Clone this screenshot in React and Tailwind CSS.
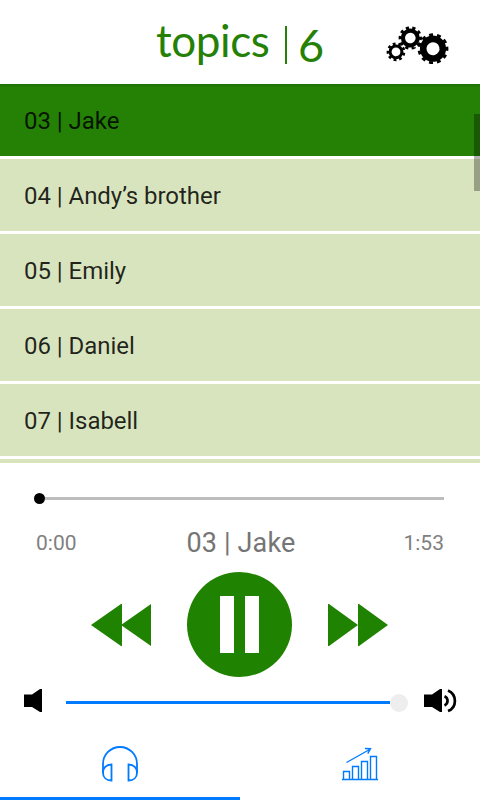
import React, { useState } from 'react';

const tracks = ['03 | Jake', '04 | Andy’s brother', '05 | Emily', '06 | Daniel', '07 | Isabell'];

const App = () => {
  const [current, setCurrent] = useState(0);

  return (
    <div className="flex h-[800px] w-[480px] flex-col overflow-hidden bg-white font-['Roboto',sans-serif]">
      <Header />
      <TrackList current={current} onSelect={setCurrent} />
      <Player title={tracks[current]} />
      <TabBar />
    </div>
  );
};

const Header = () => (
  <header className="flex h-[84px] shrink-0 justify-between pl-[156px] pr-[31px]">
    <h1 className="flex font-['Lato',sans-serif] text-[#258006]">
      <span className="mt-[14px] w-[114px] text-[44px] leading-[52px] tracking-[-0.4px]">topics</span>
      <span className="ml-[15px] mt-[26px] h-[38px] w-[2px] bg-[#258006]" />
      <span className="ml-[11px] mt-[19px] text-[45px] leading-[52px]">6</span>
    </h1>
    <svg className="mt-[24px] h-[42px] w-[64px]" viewBox="385 24 64 42">
      <Gear cx={433} cy={48.7} r={9.8} width={6.6} tip={14} teeth={11} turn={-98} />
      <Gear cx={410.3} cy={38} r={7.4} width={4.2} tip={10.3} teeth={10} turn={-106} />
      <Gear cx={396} cy={51.8} r={5.9} width={3} tip={8} teeth={9} turn={-103} />
    </svg>
  </header>
);

// Ring plus a dashed outer ring, each dash is one tooth
const Gear = ({ cx, cy, r, width, tip, teeth, turn }) => (
  <g fill="none" stroke="#000" transform={`rotate(${turn - 180 / teeth / 2} ${cx} ${cy})`}>
    <circle cx={cx} cy={cy} r={r} strokeWidth={width} />
    <circle cx={cx} cy={cy} r={tip} strokeWidth="2.8" pathLength={teeth * 10} strokeDasharray="5 5" />
  </g>
);

const TrackList = ({ current, onSelect }) => (
  <div className="relative h-[379px] shrink-0 overflow-hidden">
    <ul>
      {tracks.map((track, i) => (
        <li
          key={track}
          onClick={() => onSelect(i)}
          className={`flex h-[75px] items-center border-b-[3px] border-white px-6 pt-[2px] text-2xl tracking-[-0.04px] text-black/85 ${
            i === current ? 'bg-[#258006]' : 'bg-[#d8e4bd]'
          }`}
        >
          {track}
        </li>
      ))}
      <li className="h-[4px] bg-[#d8e4bd]" />
    </ul>
    <div className="absolute inset-x-0 top-0 h-[3px] bg-linear-to-b from-black/15 to-transparent" />
    <div className="absolute right-0 top-[30px] h-[77px] w-[6px] bg-black/30" />
  </div>
);

const Player = ({ title }) => (
  <section className="flex h-[263px] shrink-0 flex-col">
    <div className="mt-[30px] flex h-[11px] items-center pl-[34px] pr-9">
      <span className="size-[11px] rounded-full bg-black" />
      <span className="h-[3px] flex-1 bg-[#bdbdbd]" />
    </div>
    <div className="mt-[20px] flex h-[38px] items-center justify-between px-9 text-[21px] text-[#808080]">
      <span className="w-[60px] pt-[2px]">0:00</span>
      <span className="pl-[2px] text-[27px] tracking-[0.15px] text-[#757575]">{title}</span>
      <span className="w-[60px] pt-[2px] text-right">1:53</span>
    </div>
    <div className="mt-[10px] flex h-[105px] items-center pl-[91px]">
      <button aria-label="Previous">
        <svg className="h-[44px] w-[61px]" viewBox="0 0 61 44" fill="#208201">
          <path d="M0 22 30 1h1v42h-1zM30 22 60 1v42z" />
        </svg>
      </button>
      <button
        aria-label="Pause"
        className="ml-[35px] flex size-[105px] items-center justify-center gap-[11px] rounded-full bg-[#208201]"
      >
        <span className="h-[57px] w-[14px] bg-white" />
        <span className="h-[57px] w-[14px] bg-white" />
      </button>
      <button aria-label="Next" className="ml-[36px]">
        <svg className="h-[44px] w-[61px]" viewBox="0 0 61 44" fill="#208201">
          <path d="M0 1h1l29 21L1 43H0zM30 1h1l29 21L31 43h-1z" />
        </svg>
      </button>
    </div>
    <div className="mt-[9px] flex h-[33px] items-center pl-6 pr-[22px]">
      <svg className="-mt-[3px] h-[24px] w-[18px]" viewBox="0 0 18 24">
        <path d="M0 5.5h8L16 0h2v23h-2l-8-5H0z" />
      </svg>
      <span className="ml-6 h-[3px] flex-1 bg-[#007bff]" />
      <span className="size-[18px] rounded-full bg-[#eee]" />
      <svg className="-mt-[3px] ml-[16px] h-[24px] w-[34px]" viewBox="0 0 34 24">
        <path d="M0 5.5h8L16 0h2v23h-2l-8-5H0z" />
        <path d="M20.5 7.2a5 5 0 0 1 0 9.2M24 1.5c9.2 4 9.2 17 0 20.5" fill="none" stroke="#000" strokeWidth="2.7" />
      </svg>
    </div>
  </section>
);

const TabBar = () => (
  <nav className="flex h-[74px] shrink-0">
    <button aria-label="Listen" className="flex flex-1 justify-center border-b-[3px] border-[#007bff] pt-[19px]">
      <svg className="size-[38px]" viewBox="0 0 38 38" fill="none" stroke="#007bff" strokeWidth="1.8">
        <path d="M2 28V19a17 17 0 0 1 34 0v9" />
        <path d="M10.5 19.5v16C5 35.5 2 32 2 27.7s3-8.2 8.5-8.2zM27.5 19.5v16c5.5 0 8.5-3.5 8.5-7.8s-3-8.2-8.5-8.2z" />
      </svg>
    </button>
    <button aria-label="Progress" className="flex flex-1 justify-center border-b-[3px] border-transparent pt-[19px]">
      <svg className="size-[38px]" viewBox="0 0 38 38" fill="none" stroke="#007bff" strokeWidth="1.4">
        <path d="M1 34.5h36M2.5 34.5v-8h6v8M11.5 34.5v-13h6v13M20.5 34.5v-18h6v18M29.5 34.5v-23h6v23" />
        <path d="M5.5 17.5 29.5 4M24 3.5l5.5.2-2.7 5" />
      </svg>
    </button>
  </nav>
);

export default App;
